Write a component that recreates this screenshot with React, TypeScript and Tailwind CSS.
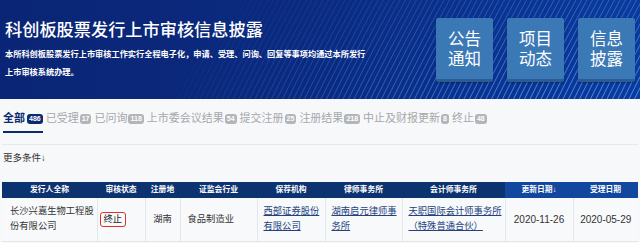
import React from 'react';

const tabs = [
  { label: '已受理', count: '17' },
  { label: '已问询', count: '118' },
  { label: '上市委会议结果', count: '54' },
  { label: '提交注册', count: '25' },
  { label: '注册结果', count: '218' },
  { label: '中止及财报更新', count: '8' },
  { label: '终止', count: '48' },
];

const cols = [
  { title: '发行人全称', w: 'w-[95px]' },
  { title: '审核状态', w: 'w-[48px]' },
  { title: '注册地', w: 'w-[35px]' },
  { title: '证监会行业', w: 'w-[77px]' },
  { title: '保荐机构', w: 'w-[68px]' },
  { title: '律师事务所', w: 'w-[77px]' },
  { title: '会计师事务所', w: 'w-[103px]' },
  { title: '更新日期↓', w: 'w-[68px]', hi: true },
  { title: '受理日期', w: 'w-[65px]', hi: true },
];

const BannerLines = () => {
  const lines = [];
  for (let i = 0; i < 90; i++) {
    const x = 150 + i * 5.5;
    const op = Math.min(0.85, (i / 90) * 1.1);
    lines.push(
      <path
        key={i}
        d={`M ${x} 100 Q ${x + 22} 55 ${x + 52} 0`}
        stroke="#4fa2ff"
        strokeWidth="1"
        fill="none"
        opacity={op}
      />
    );
  }
  return (
    <svg className="absolute inset-0 w-full h-full" viewBox="0 0 640 99" preserveAspectRatio="none">
      <defs>
        <linearGradient id="fade" x1="0" y1="0" x2="0" y2="1">
          <stop offset="0" stopColor="#fff" stopOpacity="0.5" />
          <stop offset="1" stopColor="#fff" stopOpacity="1" />
        </linearGradient>
        <mask id="m">
          <rect width="640" height="99" fill="url(#fade)" />
        </mask>
      </defs>
      <g mask="url(#m)">{lines}</g>
    </svg>
  );
};

const BigButton = ({ a, b }: { a: string; b: string }) => (
  <div className="w-[57px] h-[64px] rounded-[2px] bg-[#3b78b6] border-b-[3px] border-[#2a5c93] flex flex-col items-center justify-center text-white text-[16.5px] leading-[20px] shadow-[0_1px_2px_rgba(0,0,0,0.3)]">
    <span>{a}</span>
    <span>{b}</span>
  </div>
);

const Link = ({ a, b }: { a: string; b: string }) => (
  <span className="underline text-[#24417e] whitespace-nowrap">
    {a}
    <br />
    {b}
  </span>
);

export default function App() {
  return (
    <div className="w-[640px] h-[243px] overflow-hidden bg-[#f7f8fa] font-['Liberation_Sans','Noto_Sans_CJK_SC',sans-serif]">
      <div className="relative h-[99px] bg-gradient-to-r from-[#0a2575] via-[#0b2a80] to-[#0c3a9c] overflow-hidden">
        <BannerLines />
        <div className="relative flex h-full">
          <div className="flex-1 pl-[5px] pt-[20px] text-white">
            <h1 className="text-[17.2px] leading-[20px] font-medium">科创板股票发行上市审核信息披露</h1>
            <p className="mt-[6px] text-[8.2px] leading-[18px] font-bold whitespace-nowrap">
              本所科创板股票发行上市审核工作实行全程电子化，申请、受理、问询、回复等事项均通过本所发行
              <br />
              上市审核系统办理。
            </p>
          </div>
          <div className="flex gap-[14px] pt-[18px] pr-[5px]">
            <BigButton a="公告" b="通知" />
            <BigButton a="项目" b="动态" />
            <BigButton a="信息" b="披露" />
          </div>
        </div>
      </div>

      <div className="px-[2px]">
        <div className="flex items-end gap-[3px] pt-[13px] pl-[1px] text-[11px] leading-[13px]">
          <div className="flex items-center gap-[2px] pb-[6px] border-b-2 border-[#0c2b6e] text-[#0c2b6e] font-bold">
            <span>全部</span>
            <span className="bg-[#0c2b6e] text-white text-[7px] leading-[10px] px-[2px] rounded-[3px] font-bold">486</span>
          </div>
          {tabs.map((t) => (
            <div key={t.label} className="flex items-center gap-[1px] pb-[8px] text-[#a6a8ac]">
              <span>{t.label}</span>
              <span className="bg-[#b3b5b9] text-white text-[7px] leading-[10px] px-[2px] rounded-[3px] font-bold">{t.count}</span>
            </div>
          ))}
        </div>
        <div className="mt-[11px] border-t border-[#e6e8eb]" />
        <div className="mt-[7px] pl-[1px] text-[9.5px] leading-[12px] text-[#333]">更多条件↓</div>

        <table className="mt-[18px] table-fixed border-collapse text-[9.3px] text-[#333]">
          <thead>
            <tr className="h-[16px]">
              {cols.map((c) => (
                <th
                  key={c.title}
                  className={`${c.w} p-0 text-[7.8px] font-bold text-white text-center ${c.hi ? 'bg-[#11479e]' : 'bg-[#0c3270]'}`}
                >
                  {c.title}
                </th>
              ))}
            </tr>
          </thead>
          <tbody>
            <tr className="h-[43px] bg-[#f8f9fb] border-b border-[#e3e6ea] leading-[15px]">
              <td className="pl-[8px] border-r border-[#e3e6ea] whitespace-nowrap">
                长沙兴嘉生物工程股
                <br />
                份有限公司
              </td>
              <td className="pl-[2px] border-r border-[#e3e6ea]">
                <span className="inline-block border border-[#e0302a] rounded-[3px] px-[3px] leading-[13px] text-[#222]">终止</span>
              </td>
              <td className="text-center border-r border-[#e3e6ea]">湖南</td>
              <td className="pl-[7px] border-r border-[#e3e6ea]">食品制造业</td>
              <td className="pl-[6px] border-r border-[#e3e6ea]">
                <Link a="西部证券股份" b="有限公司" />
              </td>
              <td className="pl-[6px] border-r border-[#e3e6ea]">
                <Link a="湖南启元律师事" b="务所" />
              </td>
              <td className="pl-[6px] border-r border-[#e3e6ea]">
                <Link a="天职国际会计师事务所" b="（特殊普通合伙）" />
              </td>
              <td className="text-center text-[10px] border-r border-[#e3e6ea]">2020-11-26</td>
              <td className="text-center text-[10px]">2020-05-29</td>
            </tr>
          </tbody>
        </table>
      </div>
    </div>
  );
}
